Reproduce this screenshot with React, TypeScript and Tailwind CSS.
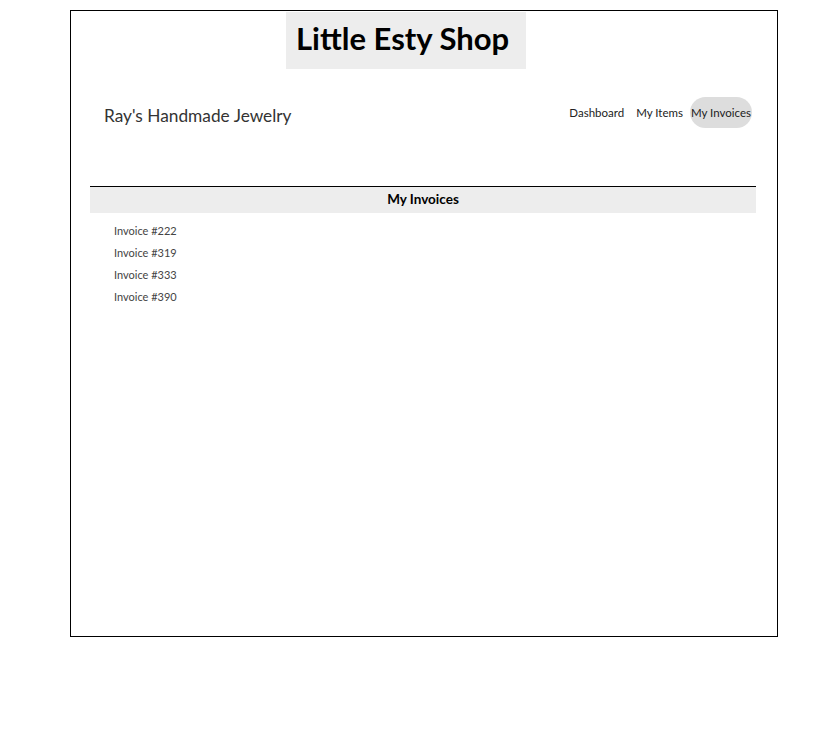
export default function App() {
    const invoices = [222, 319, 333, 390];

    return (
        <div className="font-['Lato','Liberation_Sans',sans-serif] text-black">
            <div className="ml-[70px] mt-[10px] w-[708px] h-[627px] border border-black">
                {/* Title */}
                <div className="ml-[215px] mt-px w-[240px] h-[57px] bg-[#ededed] pl-[10px] pb-[5px] flex items-center">
                    <h1 className="text-[31px] font-bold leading-none">Little Esty Shop</h1>
                </div>

                {/* Merchant bar */}
                <div className="flex items-start justify-between mt-[28px] pl-[33px] pr-[25px]">
                    <h2 className="text-[17.3px] leading-none text-[#333] mt-[10px]">Ray's Handmade Jewelry</h2>
                    <nav className="flex items-center h-[31px] text-[11.5px] text-[#222]">
                        <a className="px-[6px]">Dashboard</a>
                        <a className="pl-[6px] pr-[7px]">My Items</a>
                        <a className="px-px h-[31px] flex items-center rounded-full bg-[#dddddd]">My Invoices</a>
                    </nav>
                </div>

                {/* Invoices */}
                <section className="ml-[19px] mr-[21px] mt-[58px]">
                    <div className="border-t border-black bg-[#ededed] h-[27px] flex items-center justify-center pb-px">
                        <h3 className="text-[13.5px] font-bold">My Invoices</h3>
                    </div>
                    <ul className="mt-[7px] pl-[24px] text-[11px] text-[#444]">
                        {invoices.map((id) => (
                            <li key={id} className="h-[22px] flex items-center">
                                <a>Invoice #{id}</a>
                            </li>
                        ))}
                    </ul>
                </section>
            </div>
        </div>
    );
}
